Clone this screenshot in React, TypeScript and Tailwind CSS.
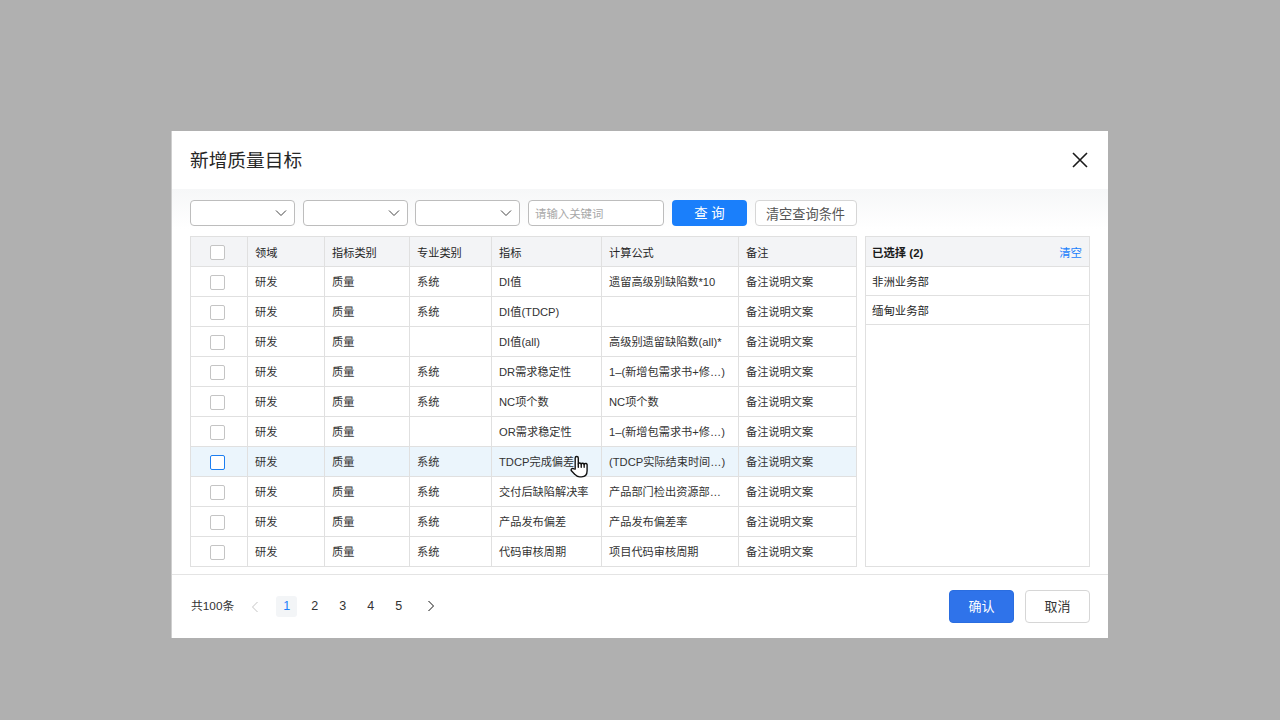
import React from "react";

const FONT = "[font-family:'Liberation_Sans','Noto_Sans_CJK_SC',sans-serif]";

const COLS = "grid grid-cols-[57px_77px_85px_82px_110px_137px_117px]";

type Row = [string, string, string, string, string, string];
const rows: Row[] = [
  ["研发", "质量", "系统", "DI值", "遗留高级别缺陷数*10", "备注说明文案"],
  ["研发", "质量", "系统", "DI值(TDCP)", "", "备注说明文案"],
  ["研发", "质量", "", "DI值(all)", "高级别遗留缺陷数(all)*", "备注说明文案"],
  ["研发", "质量", "系统", "DR需求稳定性", "1–(新增包需求书+修…)", "备注说明文案"],
  ["研发", "质量", "系统", "NC项个数", "NC项个数", "备注说明文案"],
  ["研发", "质量", "", "OR需求稳定性", "1–(新增包需求书+修…)", "备注说明文案"],
  ["研发", "质量", "系统", "TDCP完成偏差", "(TDCP实际结束时间…)", "备注说明文案"],
  ["研发", "质量", "系统", "交付后缺陷解决率", "产品部门检出资源部…", "备注说明文案"],
  ["研发", "质量", "系统", "产品发布偏差", "产品发布偏差率", "备注说明文案"],
  ["研发", "质量", "系统", "代码审核周期", "项目代码审核周期", "备注说明文案"],
];
const headers = ["领域", "指标类别", "专业类别", "指标", "计算公式", "备注"];

function Check({ active }: { active?: boolean }) {
  return (
    <span
      className={
        "block w-[15px] h-[15px] rounded-[2px] border bg-white " +
        (active ? "border-[#1c7ef0]" : "border-[#c4c4c4]")
      }
    />
  );
}

function Select() {
  return (
    <div className="w-[105px] h-[26px] rounded-[4px] border border-[#bdbdbd] bg-white flex items-center justify-end pr-[7px]">
      <svg width="12" height="12" viewBox="0 0 12 12" fill="none" stroke="#444" strokeWidth="1">
        <path d="M1 3.5 L6 8.5 L11 3.5" />
      </svg>
    </div>
  );
}

function Cursor() {
  return (
    <svg
      className="absolute left-[-4px] top-[-8px]"
      width="19"
      height="23"
      viewBox="0 0 22 26"
      fill="#fff"
      stroke="#111"
      strokeWidth="1.6"
      strokeLinecap="round"
      strokeLinejoin="round"
    >
      <path d="M6 16V3.2a1.8 1.8 0 0 1 3.6 0V10a1.8 1.8 0 0 1 3.4 .3a1.8 1.8 0 0 1 3.4 .5a1.7 1.7 0 0 1 3.4 .8v6.4c0 4.2-2.6 7-6.5 7h-2c-2.6 0-4.2-1-5.6-2.8L1.600 18a1.8 1.800 0 0 1 2.700-2.300z" />
      <path d="M9.600 10v4M13 10.300v3.700M16.400 10.800v3.200" fill="none" />
    </svg>
  );
}

export default function App() {
  return (
    <div className={"w-[1280px] h-[720px] bg-[#b0b0b0] pt-[131px] pl-[171px] overflow-hidden " + FONT}>
      <div className="w-[937px] h-[507px] bg-white flex flex-col border-l border-[#cfcfcf]">
        <div className="h-[58px] flex items-center justify-between pl-[18px] pr-[19px]">
          <span className="text-[18.7px] text-[#262626] pt-[2px]">新增质量目标</span>
          <svg width="18" height="18" viewBox="0 0 18 18" fill="none" stroke="#1a1a1a" strokeWidth="1.6">
            <path d="M2 2 L16 16 M16 2 L2 16" />
          </svg>
        </div>

        <div className="h-[385px] px-[18px] pt-[11px] bg-gradient-to-b from-[#f6f7f8] to-white to-[40px]">
          <div className="flex items-center h-[26px]">
            <Select />
            <div className="ml-[8px]"><Select /></div>
            <div className="ml-[7px]"><Select /></div>
            <div className="ml-[8px] w-[136px] h-[26px] rounded-[4px] border border-[#bdbdbd] bg-white flex items-center pl-[6px] pt-[3px] text-[11.4px] text-[#a8a8a8]">
              请输入关键词
            </div>
            <div className="ml-[8px] w-[75px] h-[26px] rounded-[4px] bg-[#1a7ffb] flex items-center justify-center pt-[3px] text-[13.4px] text-white">
              查 询
            </div>
            <div className="ml-[8px] w-[102px] h-[26px] rounded-[4px] border border-[#d6d6d6] bg-white flex items-center justify-center pt-[3px] pr-[1px] text-[13.2px] text-[#555]">
              清空查询条件
            </div>
          </div>

          <div className="flex mt-[10px]">
            <div className="w-[667px] h-[331px] border border-[#e0e0e0] relative text-[11.2px] text-[#333]">
              <div className={COLS + " h-[30px] bg-[#f3f4f6] border-b border-[#e0e0e0] text-[#262626]"}>
                <div className="flex items-center justify-center border-r border-[#e0e0e0] pr-[3px] pt-[2px]">
                  <Check />
                </div>
                {headers.map((h, i) => (
                  <div
                    key={h}
                    className={"flex items-center pl-[7px] pt-[3px] " + (i < 5 ? "border-r border-[#e0e0e0]" : "")}
                  >
                    {h}
                  </div>
                ))}
              </div>
              {rows.map((r, ri) => (
                <div
                  key={ri}
                  className={
                    COLS +
                    " h-[30px] border-b border-[#e0e0e0] last:border-b-0 last:h-[29px] " +
                    (ri === 6 ? "bg-[#ebf5fc]" : "bg-white")
                  }
                >
                  <div className="flex items-center justify-center border-r border-[#e0e0e0] pr-[3px] pt-[1px]">
                    <Check active={ri === 6} />
                  </div>
                  {r.map((c, i) => (
                    <div
                      key={i}
                      className={
                        "flex items-center pl-[7px] pt-[2.5px] whitespace-nowrap overflow-visible relative " +
                        (i < 5 ? "border-r border-[#e0e0e0]" : "")
                      }
                    >
                      {c}
                      {ri === 6 && i === 3 && (
                        <span className="relative w-0 h-0">
                          <Cursor />
                        </span>
                      )}
                    </div>
                  ))}
                </div>
              ))}
            </div>

            <div className="ml-[8px] w-[225px] h-[331px] border border-[#e0e0e0] text-[11.4px] text-[#262626]">
              <div className="h-[30px] bg-[#f3f4f6] border-b border-[#e0e0e0] flex items-center justify-between pl-[6px] pr-[7px] pt-[4px]">
                <span className="font-bold text-[#1a1a1a]">已选择 (2)</span>
                <span className="text-[#1a7ffb]">清空</span>
              </div>
              <div className="h-[29px] border-b border-[#e0e0e0] flex items-center pl-[6px] pt-[3px]">非洲业务部</div>
              <div className="h-[29px] border-b border-[#e0e0e0] flex items-center pl-[6px] pt-[3px]">缅甸业务部</div>
            </div>
          </div>
        </div>

        <div className="h-[64px] border-t border-[#e4e4e4] flex items-center justify-between pl-[19px] pr-[18px]">
          <div className="flex items-center text-[12.5px] text-[#333]">
            <span className="text-[11.8px]">共100条</span>
            <svg className="ml-[16px]" width="10" height="12" viewBox="0 0 10 12" fill="none" stroke="#c4c4c4" strokeWidth="1">
              <path d="M7.5 1 L2.500 6 L7.500 11" />
            </svg>
            <span className="ml-[16px] w-[21px] h-[21px] rounded-[3px] bg-[#f3f5f7] text-[#1a7ffb] flex items-center justify-center">1</span>
            <span className="ml-[7px] w-[21px] h-[21px] flex items-center justify-center">2</span>
            <span className="ml-[7px] w-[21px] h-[21px] flex items-center justify-center">3</span>
            <span className="ml-[7px] w-[21px] h-[21px] flex items-center justify-center">4</span>
            <span className="ml-[7px] w-[21px] h-[21px] flex items-center justify-center">5</span>
            <svg className="ml-[17px] mb-[2px]" width="10" height="12" viewBox="0 0 10 12" fill="none" stroke="#111" strokeWidth="1">
              <path d="M2.500 1 L7.500 6 L2.500 11" />
            </svg>
          </div>
          <div className="flex items-center mb-[1px]">
            <div className="w-[65px] h-[33px] rounded-[4px] bg-[#2f73ea] border border-[#2a6de0] text-white text-[13px] flex items-center justify-center pt-[1px]">
              确认
            </div>
            <div className="ml-[11px] w-[65px] h-[33px] rounded-[4px] bg-white border border-[#d6d6d6] text-[#333] text-[13px] flex items-center justify-center pt-[1px]">
              取消
            </div>
          </div>
        </div>
      </div>
    </div>
  );
}
